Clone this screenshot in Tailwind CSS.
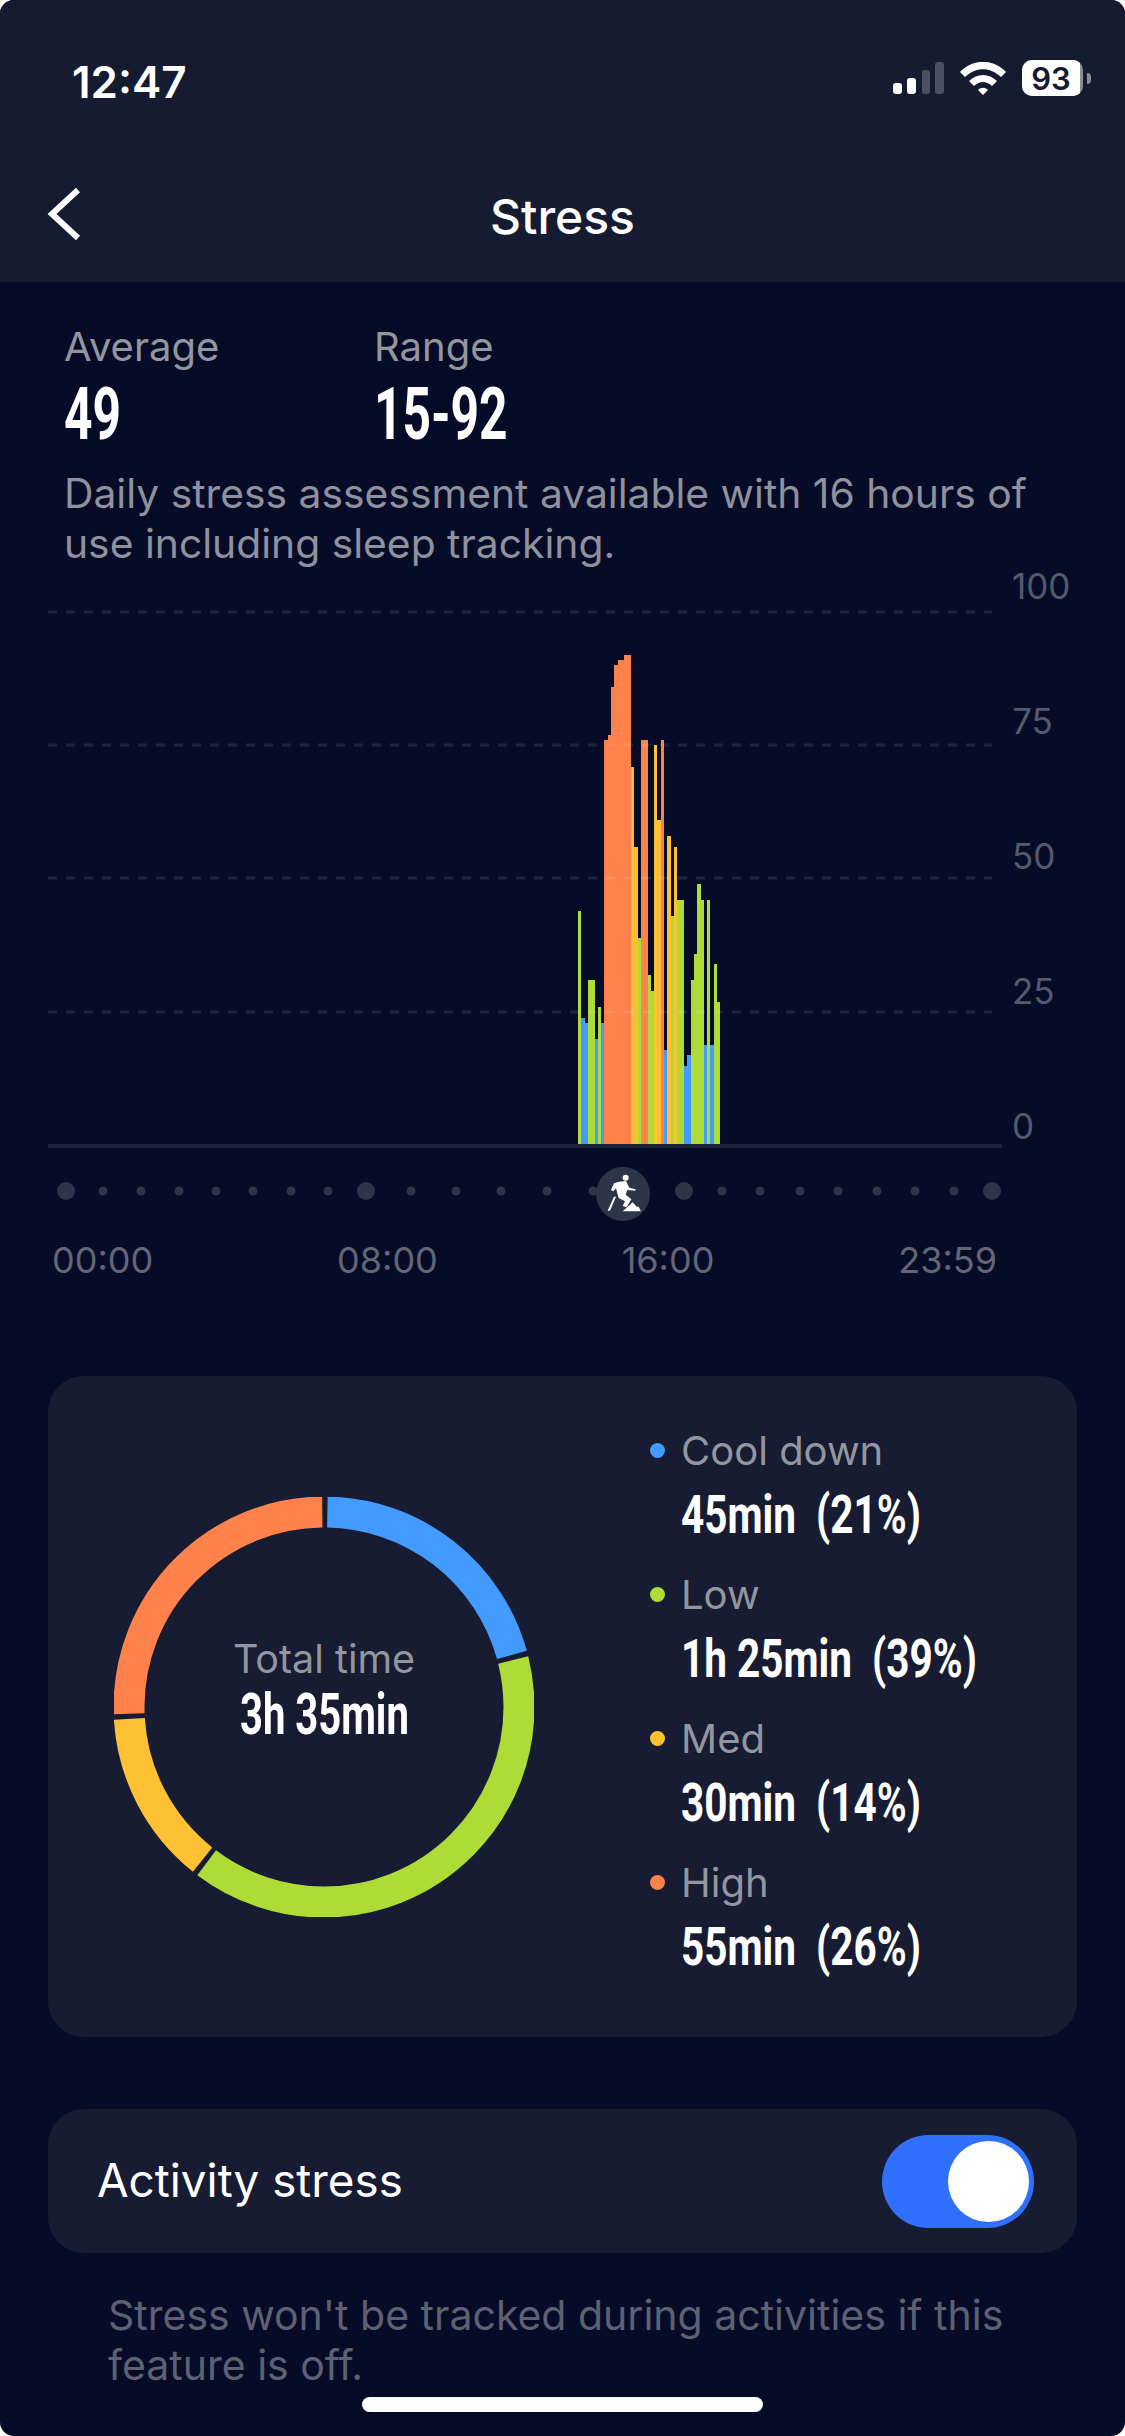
<!DOCTYPE html>
<html lang="en">
<head>
  <meta charset="UTF-8">
  <meta name="viewport" content="width=device-width, initial-scale=1.0">
  <title>Stress</title>
  <script src="https://cdn.jsdelivr.net/npm/@tailwindcss/browser@4"></script>
</head>
<body class="bg-white font-['Inter','Noto_Sans',sans-serif]">
  <div class="relative w-[1125px] h-[2436px] overflow-hidden rounded-[14px] bg-[#060c27]">

    <!-- Header -->
    <header class="h-[282px] bg-[#151b30] text-white">
      <div class="h-[164px] pl-[72px] pr-[34px] pt-[50px] flex justify-between items-start">
        <span class="text-[44px] leading-[64px] font-semibold">12:47</span>
        <div class="flex items-center gap-[16px] mt-[10px]">
          <svg width="51" height="32" viewBox="0 0 51 32">
            <rect x="0" y="21" width="9" height="11" rx="3" fill="#fff"/>
            <rect x="14" y="16" width="9" height="16" rx="3" fill="#fff"/>
            <rect x="29" y="8" width="8" height="24" rx="3" fill="#4c5062"/>
            <rect x="42" y="0" width="9" height="32" rx="3" fill="#4c5062"/>
          </svg>
          <svg width="46" height="33" viewBox="0 0 46 33">
            <path d="M0 10 C13 -3.500 33 -3.500 46 10 L41 15 C30 4.500 16 4.500 5 15 Z" fill="#fff"/>
            <path d="M9 19 C17 11 29 11 37 19 L32 24 C26 18.500 20 18.500 14 24 Z" fill="#fff"/>
            <path d="M18 28 C21 25 25 25 28 28 L23 33 Z" fill="#fff"/>
          </svg>
          <div class="flex items-center gap-[4px]">
            <div class="relative w-[61px] h-[36px] rounded-[10px] bg-[#8a8c98] overflow-hidden">
              <div class="w-[58px] h-[36px] bg-white flex items-center justify-center text-[#151b30] text-[31px] font-semibold leading-none">93</div>
            </div>
            <div class="w-[4px] h-[11px] rounded-r-full bg-[#8a8c98]"></div>
          </div>
        </div>
      </div>
      <nav class="relative h-[106px] flex items-center justify-center">
        <svg class="absolute left-[44px] top-[20px]" width="40" height="60" viewBox="0 0 40 60" fill="none">
          <path d="M34 6 L8 30 L34 54" stroke="#fff" stroke-width="6"/>
        </svg>
        <h1 class="text-[48px] font-medium">Stress</h1>
      </nav>
    </header>

    <!-- Summary -->
    <section class="px-[64px] pt-[42px]">
      <div class="flex">
        <div class="w-[310px]">
          <p class="text-[40px] leading-[46px] text-[#94969f]">Average</p>
          <p class="mt-[10px] text-[72px] leading-[70px] font-bold text-white font-['Roboto',sans-serif] origin-left scale-x-[0.69]">49</p>
        </div>
        <div>
          <p class="text-[40px] leading-[46px] text-[#94969f]">Range</p>
          <p class="mt-[10px] text-[72px] leading-[70px] font-bold text-white font-['Roboto',sans-serif] origin-left scale-x-[0.69]">15-92</p>
        </div>
      </div>
      <p class="mt-[18px] text-[40.800px] leading-[50px] text-[#8f919e]">Daily stress assessment available with 16 hours of<br>use including sleep tracking.</p>
    </section>

    <!-- Chart -->
    <section class="-mt-[8px] flex">
      <svg id="chart" class="block" width="1005" height="592" viewBox="0 560 1005 592"></svg>
      <div class="ml-[7px] pt-[6px] flex flex-col gap-[95px] text-[35px] leading-[40px] text-[#555a6b]">
        <span>100</span>
        <span>75</span>
        <span>50</span>
        <span>25</span>
        <span>0</span>
      </div>
    </section>

    <!-- Timeline dots -->
    <svg id="timeline" class="block" width="1125" height="73" viewBox="0 1152 1125 73"></svg>
    <div class="mt-[13px] ml-[52px] w-[945px] flex justify-between text-[36px] leading-[44px] text-[#636676]">
      <span>00:00</span><span>08:00</span><span>16:00</span><span>23:59</span>
    </div>

    <!-- Time breakdown card -->
    <section class="mt-[94px] mx-[48px] w-[1029px] h-[661px] rounded-[36px] bg-[#171c32] flex items-center pl-[66px]">
      <div class="relative w-[420px] h-[420px] shrink-0">
        <svg width="420" height="420" viewBox="0 0 420 420" fill="none" class="-rotate-90">
          <circle cx="210" cy="210" r="195" stroke="#449bff" stroke-width="31" pathLength="360" stroke-dasharray="73.500 286.500" stroke-dashoffset="-1"/>
          <circle cx="210" cy="210" r="195" stroke="#acdc35" stroke-width="31" pathLength="360" stroke-dasharray="141 219" stroke-dashoffset="-76"/>
          <circle cx="210" cy="210" r="195" stroke="#fec133" stroke-width="31" pathLength="360" stroke-dasharray="48 312" stroke-dashoffset="-218.500"/>
          <circle cx="210" cy="210" r="195" stroke="#ff814b" stroke-width="31" pathLength="360" stroke-dasharray="91.500 268.500" stroke-dashoffset="-268"/>
        </svg>
        <div class="absolute inset-0 pb-[36px] flex flex-col items-center justify-center">
          <p class="text-[39.500px] leading-[50px] text-[#94969f]">Total time</p>
          <p class="text-[58px] leading-[60px] font-bold text-white font-['Roboto',sans-serif] whitespace-nowrap scale-x-[0.69]">3h 35min</p>
        </div>
      </div>
      <div class="ml-[116px] flex flex-col gap-[16px]">
        <div>
          <div class="h-[48px] flex items-center gap-[16px] text-[40px] text-[#94969f]"><span class="w-[15px] h-[15px] rounded-full bg-[#449bff]"></span>Cool down</div>
          <div class="h-[80px] pl-[31px]"><p class="text-[54px] leading-[80px] font-bold text-white font-['Roboto',sans-serif] whitespace-pre origin-left scale-x-[0.75]">45min  (21%)</p></div>
        </div>
        <div>
          <div class="h-[48px] flex items-center gap-[16px] text-[40px] text-[#94969f]"><span class="w-[15px] h-[15px] rounded-full bg-[#acdc35]"></span>Low</div>
          <div class="h-[80px] pl-[31px]"><p class="text-[54px] leading-[80px] font-bold text-white font-['Roboto',sans-serif] whitespace-pre origin-left scale-x-[0.75]">1h 25min  (39%)</p></div>
        </div>
        <div>
          <div class="h-[48px] flex items-center gap-[16px] text-[40px] text-[#94969f]"><span class="w-[15px] h-[15px] rounded-full bg-[#fec133]"></span>Med</div>
          <div class="h-[80px] pl-[31px]"><p class="text-[54px] leading-[80px] font-bold text-white font-['Roboto',sans-serif] whitespace-pre origin-left scale-x-[0.75]">30min  (14%)</p></div>
        </div>
        <div>
          <div class="h-[48px] flex items-center gap-[16px] text-[40px] text-[#94969f]"><span class="w-[15px] h-[15px] rounded-full bg-[#ff814b]"></span>High</div>
          <div class="h-[80px] pl-[31px]"><p class="text-[54px] leading-[80px] font-bold text-white font-['Roboto',sans-serif] whitespace-pre origin-left scale-x-[0.75]">55min  (26%)</p></div>
        </div>
      </div>
    </section>

    <!-- Activity stress toggle -->
    <section class="mt-[72px] mx-[48px] w-[1029px] h-[144px] rounded-[36px] bg-[#171c32] flex items-center justify-between pl-[49px] pr-[43px]">
      <span class="text-[45.800px] text-white">Activity stress</span>
      <div class="w-[152px] h-[93px] rounded-full bg-[#3070ff] flex items-center justify-end pr-[5px]">
        <div class="w-[81px] h-[81px] rounded-full bg-white"></div>
      </div>
    </section>
    <p class="mt-[37px] px-[108px] text-[41px] leading-[50px] text-[#5d6172] whitespace-nowrap">Stress won't be tracked during activities if this<br>feature is off.</p>

    <!-- Home indicator -->
    <div class="absolute left-[362px] top-[2397px] w-[401px] h-[15px] rounded-full bg-white"></div>
  </div>

  <script>
    // [left, right, top, colour] in page pixels
    const B = '#449bff', G = '#acdc35', Y = '#fec133', O = '#ff814b';
    const bars = [
      [578,581,911,G],[581,585,1018,B],[585,588,1023,B],[588,595,980,G],[595,598,1039,B],[598,601,1007,G],
      [601,604,1023,B],[604,608,740,O],[608,611,735,O],[611,614,687,O],[614,618,665,O],[618,624,660,O],
      [624,631,655,O],[631,634,767,Y],[634,638,847,Y],[638,641,938,G],[641,648,740,O],[648,651,975,G],
      [651,654,991,G],[654,657,745,Y],[657,661,820,Y],[661,664,740,O],[664,667,1050,B],[667,671,836,Y],
      [671,674,916,G],[674,677,847,Y],[677,684,900,G],[684,687,1066,B],[687,691,1055,B],[691,694,980,G],
      [694,697,954,G],[697,701,884,G],[701,704,900,G],[704,707,1045,B],[707,710,900,G],[710,714,1045,B],
      [714,717,964,G],[717,720,1002,G]
    ];
    let chart = '';
    bars.forEach(b => {
      chart += `<rect x="${b[0]}" y="${b[2]}" width="${b[1] - b[0]}" height="${1146 - b[2]}" fill="${b[3]}"/>`;
    });
    [612, 745, 878, 1012].forEach(y => {
      chart += `<line x1="48" x2="992" y1="${y}" y2="${y}" stroke="#fff" stroke-opacity="0.1" stroke-width="3" stroke-dasharray="9 9"/>`;
    });
    chart += '<rect x="48" y="1144" width="954" height="4" fill="#1b2238"/>';
    document.getElementById('chart').innerHTML = chart;

    let dots = '';
    [66, 366, 684, 992].forEach(x => { dots += `<circle cx="${x}" cy="1191" r="9" fill="#2f3549"/>`; });
    [103,141,179,216,253,291,328,411,456,501,547,593,722,760,800,838,877,915,954].forEach(x => {
      dots += `<circle cx="${x}" cy="1191" r="4.5" fill="#2f3549"/>`;
    });
    dots += '<circle cx="623" cy="1194" r="27" fill="#2f3549"/>';
    dots += `<g transform="translate(570 1150) scale(0.3333)" fill="#fff">
      <circle cx="167" cy="83" r="9"/>
      <path d="M148 95 L168 93 L178 113 L197 118 L196 122 L172 120 L167 134 L184 148 L170 172 L158 168 L165 154 L146 144 L142 130 L138 115 L130 124 L123 120 L132 100 Z"/>
      <path d="M132 140 L138 140 L120 182 L113 182 Z"/>
      <path d="M158 184 L188 157 L200 170 L206 170 L213 184 Z"/>
    </g>`;
    document.getElementById('timeline').innerHTML = dots;
  </script>
</body>
</html>
